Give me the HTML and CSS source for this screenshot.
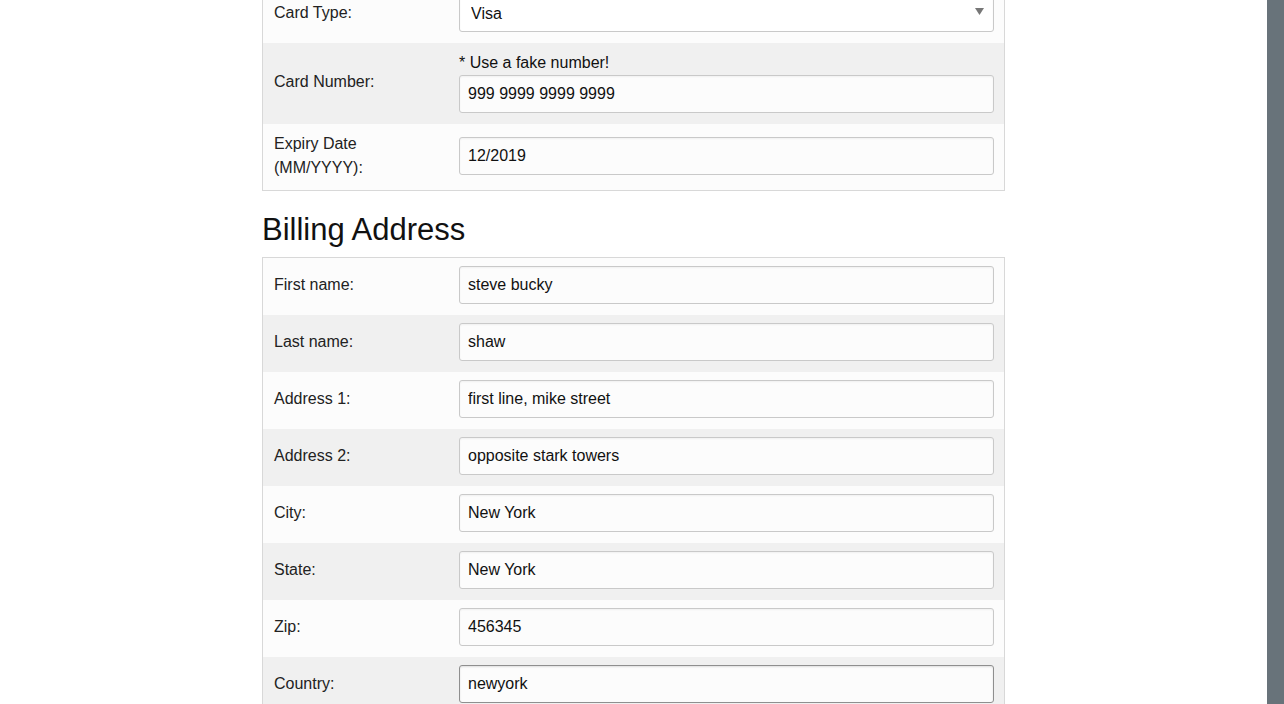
FILE: index.html
```html
<!DOCTYPE html>
<html lang="en">
<head>
<meta charset="utf-8">
<title>Checkout</title>
<link rel="stylesheet" href="styles.css">
</head>
<body>
<div class="page">
  <main class="main">
    <div class="container">
      <div class="form-table first">
        <div class="row">
          <label class="label">Card Type:</label>
          <div class="field">
            <div class="select-wrap">
              <select class="select"><option>Visa</option></select>
              <svg class="caret" width="9" height="7" viewBox="0 0 9 7"><path d="M0 0H9L4.5 7Z" fill="#777"/></svg>
            </div>
          </div>
        </div>
        <div class="row alt">
          <label class="label">Card Number:</label>
          <div class="field">
            <div class="note">* Use a fake number!</div>
            <input class="input" type="text" value="999 9999 9999 9999">
          </div>
        </div>
        <div class="row tall">
          <label class="label two-line">Expiry Date (MM/YYYY):</label>
          <div class="field">
            <input class="input" type="text" value="12/2019">
          </div>
        </div>
      </div>

      <h2 class="heading">Billing Address</h2>

      <div class="form-table">
        <div class="row">
          <label class="label">First name:</label>
          <div class="field"><input class="input" type="text" value="steve bucky"></div>
        </div>
        <div class="row alt">
          <label class="label">Last name:</label>
          <div class="field"><input class="input" type="text" value="shaw"></div>
        </div>
        <div class="row">
          <label class="label">Address 1:</label>
          <div class="field"><input class="input" type="text" value="first line, mike street"></div>
        </div>
        <div class="row alt">
          <label class="label">Address 2:</label>
          <div class="field"><input class="input" type="text" value="opposite stark towers"></div>
        </div>
        <div class="row">
          <label class="label">City:</label>
          <div class="field"><input class="input" type="text" value="New York"></div>
        </div>
        <div class="row alt">
          <label class="label">State:</label>
          <div class="field"><input class="input" type="text" value="New York"></div>
        </div>
        <div class="row">
          <label class="label">Zip:</label>
          <div class="field"><input class="input" type="text" value="456345"></div>
        </div>
        <div class="row alt">
          <label class="label">Country:</label>
          <div class="field"><input class="input focused" type="text" value="newyork"></div>
        </div>
      </div>
    </div>
  </main>
  <aside class="strip"></aside>
</div>
</body>
</html>
```

FILE: styles.css
```css
html, body {
  margin: 0;
  padding: 0;
  height: 100%;
  overflow: hidden;
  background: #ffffff;
}

body {
  font-family: "Liberation Sans", Arial, sans-serif;
  font-size: 16px;
  color: #222222;
}

.page {
  display: flex;
  height: 704px;
  overflow: hidden;
}

.main {
  flex: 1;
  min-width: 0;
}

.strip {
  width: 17px;
  flex: 0 0 17px;
  background: #68737a;
}

.container {
  width: 743px;
  margin: 0 auto;
}

.form-table {
  border: 1px solid #d8d8d8;
}

.form-table.first {
  margin-top: -15px;
}

.row {
  display: grid;
  grid-template-columns: 173px 535px;
  column-gap: 12px;
  align-items: center;
  padding: 8px 10px 11px 11px;
  background: #fcfcfc;
}

.row.tall {
  padding-bottom: 10px;
}

.row.alt {
  background: #f0f0f0;
}

.label {
  line-height: 20px;
  color: #222222;
}

.label.two-line {
  line-height: 24px;
}

.field {
  display: flex;
  flex-direction: column;
}

.note {
  line-height: 24px;
  color: #111111;
}

.input,
.select {
  box-sizing: border-box;
  width: 535px;
  height: 38px;
  margin: 0;
  padding: 0 8px;
  font-family: "Liberation Sans", Arial, sans-serif;
  font-size: 16px;
  color: #111111;
  background: #fcfcfc;
  border: 1px solid #c9c9c9;
  border-radius: 3px;
  box-shadow: inset 0 1px 2px rgba(0, 0, 0, 0.05);
  outline: none;
}

.input.focused {
  border-color: #8f8f8f;
  box-shadow: inset 0 1px 2px rgba(0, 0, 0, 0.12);
}

.select-wrap {
  position: relative;
  width: 535px;
}

.select {
  -webkit-appearance: none;
  appearance: none;
  padding-left: 11px;
  background: #ffffff;
}

.caret {
  position: absolute;
  right: 10px;
  top: 14px;
  pointer-events: none;
}

.heading {
  font-family: "Liberation Sans", Arial, sans-serif;
  font-weight: normal;
  font-size: 31px;
  line-height: 34px;
  color: #111111;
  margin: 22px 0 10px 0;
}
```
